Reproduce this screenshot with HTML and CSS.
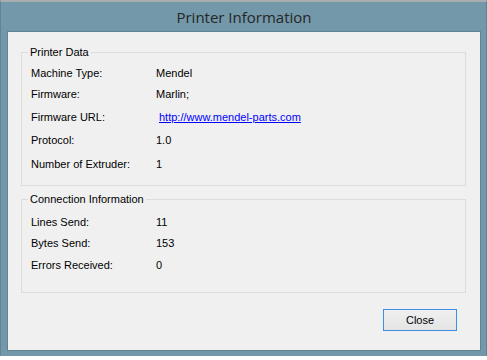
FILE: index.html
```html
<!DOCTYPE html>
<html lang="en">
<head>
  <meta charset="UTF-8">
  <title>Printer Information</title>
  <link rel="stylesheet" href="styles.css">
</head>
<body>

<div class="window">
  <div class="titlebar">Printer Information</div>

  <div class="client">
    <fieldset class="group">
      <legend>Printer Data</legend>
      <div class="rows printer-rows">
        <span>Machine Type:</span><span>Mendel</span>
        <span>Firmware:</span><span>Marlin;</span>
        <span>Firmware URL:</span><span><a class="link" href="#">http://www.mendel-parts.com</a></span>
        <span>Protocol:</span><span>1.0</span>
        <span>Number of Extruder:</span><span>1</span>
      </div>
    </fieldset>

    <fieldset class="group group-conn">
      <legend>Connection Information</legend>
      <div class="rows conn-rows">
        <span>Lines Send:</span><span>11</span>
        <span>Bytes Send:</span><span>153</span>
        <span>Errors Received:</span><span>0</span>
      </div>
    </fieldset>

    <div class="buttons">
      <button class="close-btn">Close</button>
    </div>
  </div>
</div>

</body>
</html>
```

FILE: styles.css
```css
body {
  margin: 0;
  padding: 0;
  background: #ffffff;
  font-family: "Liberation Sans", Arial, sans-serif;
}

.window {
  width: 487px;
  height: 356px;
  box-sizing: border-box;
  background-color: #7298a9;
  border-top: 2px solid #a9adb0;
  border-left: 1px solid #5f8697;
  border-right: 1px solid #5f8697;
  padding: 0 5px 5px 6px;
  display: flex;
  flex-direction: column;
}

.titlebar {
  height: 29px;
  line-height: 30px;
  text-align: center;
  font-family: "Open Sans", "Noto Sans", sans-serif;
  font-size: 15px;
  color: #262626;
}

.client {
  flex: 1;
  background-color: #f0f0f0;
  border: 1px solid #5d8394;
  display: flex;
  flex-direction: column;
  font-size: 11px;
  color: #000;
}

.group {
  margin: 14px 14px 0 13px;
  padding: 8px 10px 14px 9px;
  border: 1px solid #dcdcdc;
  min-width: 0;
}

.group legend {
  margin-left: -3px;
  padding: 0 2px;
  line-height: 13px;
}

.group-conn {
  margin-top: 7px;
  padding-top: 10px;
  padding-bottom: 20px;
}

.rows {
  display: grid;
  grid-template-columns: 125px 1fr;
  line-height: 13px;
  align-items: start;
}

.printer-rows {
  grid-template-rows: 21px 23px 23px 24px 13px;
}

.conn-rows {
  grid-template-rows: 21px 22px 13px;
}

.link {
  color: #0000ff;
  margin-left: 3px;
}

.buttons {
  display: flex;
  justify-content: flex-end;
  margin: 16px 23px 0 0;
}

.close-btn {
  width: 74px;
  height: 22px;
  box-sizing: border-box;
  border: 1px solid #3c8ee6;
  background: linear-gradient(#f0f0f0, #e4e4e4);
  font-family: "Liberation Sans", Arial, sans-serif;
  font-size: 11px;
  color: #000;
  padding: 0;
}
```
